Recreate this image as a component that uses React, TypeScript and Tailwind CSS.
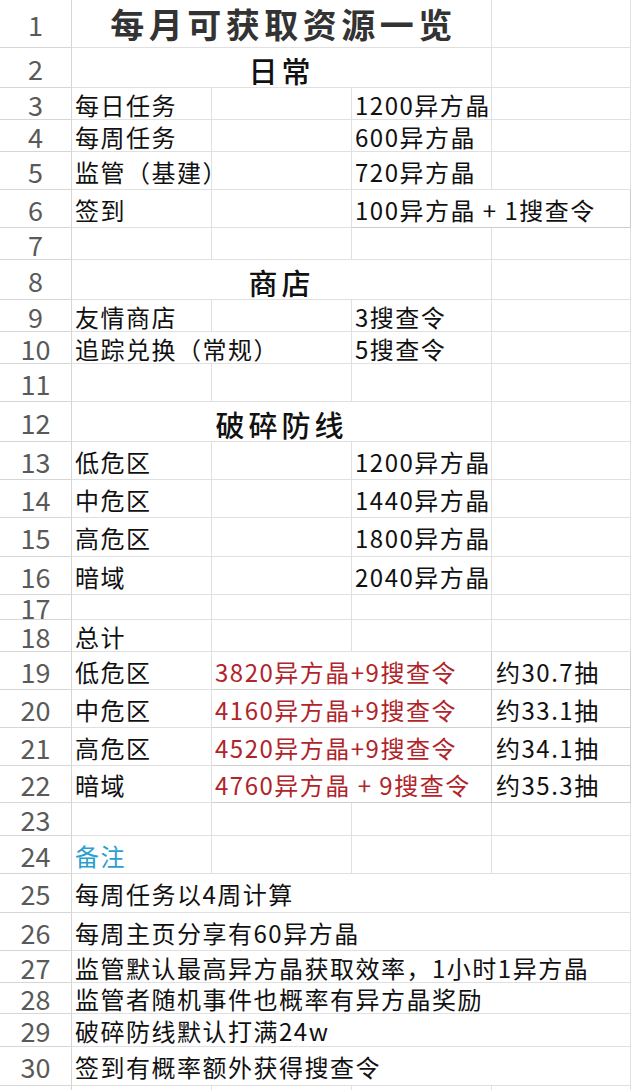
import React from "react";

const FONT = { fontFamily: '"Noto Sans CJK SC", "Noto Sans", sans-serif' };

type CellProps = {
  span?: string;
  text?: string;
  color?: string;
  pad?: string;
  border?: string;
  children?: React.ReactNode;
};

function Cell({
  span = "",
  text = "text-[24px] leading-[22px] tracking-[1.5px] justify-start pt-[2px]",
  color = "text-[#111]",
  pad = "pl-[3px]",
  border = "border-[#e0e0e0]",
  children,
}: CellProps) {
  return (
    <div
      className={`${span} ${text} ${color} ${pad} ${border} flex items-center whitespace-nowrap border-r border-b`}
    >
      {children}
    </div>
  );
}

function Row({ n, h, children }: { n?: number; h: string; children?: React.ReactNode }) {
  return (
    <div className={`grid grid-cols-[72px_140px_140px_140px_139px] ${h}`}>
      <div className="flex items-center justify-center border-r border-b border-[#d6d6d6] pt-[2px] text-[27px] leading-[20px] font-normal text-[#5a5a5a]">
        {n}
      </div>
      {children}
    </div>
  );
}

function Empty4() {
  return (
    <>
      <Cell />
      <Cell />
      <Cell />
      <Cell />
    </>
  );
}

function Header({ label }: { label: string }) {
  return (
    <>
      <Cell
        span="col-span-3"
        pad="pl-0"
        text="text-[29px] leading-[28px] tracking-[4px] font-medium justify-center pt-[5px]"
      >
        {label}
      </Cell>
      <Cell />
    </>
  );
}

function Item({ a, b, spanA = false }: { a: string; b: string; spanA?: boolean }) {
  return (
    <>
      {spanA ? (
        <Cell span="col-span-2">{a}</Cell>
      ) : (
        <>
          <Cell>{a}</Cell>
          <Cell />
        </>
      )}
      <Cell>{b}</Cell>
      <Cell />
    </>
  );
}

function Total({ a, b, c }: { a: string; b: string; c: string }) {
  return (
    <>
      <Cell>{a}</Cell>
      <Cell span="col-span-2" color="text-[#b0242a]" border="border-[#cfcfcf]">
        {b}
      </Cell>
      <Cell pad="pl-[4px]" border="border-[#cfcfcf]">
        {c}
      </Cell>
    </>
  );
}

function Note({ label }: { label: string }) {
  return <Cell span="col-span-4">{label}</Cell>;
}

export default function App() {
  return (
    <div className="w-[631px] h-[1090px] overflow-hidden bg-white" style={FONT}>
      <Row n={1} h="h-[48px]">
        <Cell
          span="col-span-3"
          pad="pl-[4px]"
          color="text-[#333]"
          text="text-[34px] leading-[34px] font-bold tracking-[4.5px] justify-center pt-[1px]"
        >
          每月可获取资源一览
        </Cell>
        <Cell />
      </Row>
      <Row n={2} h="h-[40px]">
        <Header label="日常" />
      </Row>
      <Row n={3} h="h-[32px]">
        <Item a="每日任务" b="1200异方晶" />
      </Row>
      <Row n={4} h="h-[32px]">
        <Item a="每周任务" b="600异方晶" />
      </Row>
      <Row n={5} h="h-[38px]">
        <Item a="监管（基建）" b="720异方晶" />
      </Row>
      <Row n={6} h="h-[38px]">
        <Cell>签到</Cell>
        <Cell />
        <Cell span="col-span-2" border="border-[#cccccc]">
          100异方晶 + 1搜查令
        </Cell>
      </Row>
      <Row n={7} h="h-[32px]">
        <Empty4 />
      </Row>
      <Row n={8} h="h-[40px]">
        <Header label="商店" />
      </Row>
      <Row n={9} h="h-[32px]">
        <Item a="友情商店" b="3搜查令" />
      </Row>
      <Row n={10} h="h-[32px]">
        <Item a="追踪兑换（常规）" b="5搜查令" spanA />
      </Row>
      <Row n={11} h="h-[38px]">
        <Empty4 />
      </Row>
      <Row n={12} h="h-[40px]">
        <Header label="破碎防线" />
      </Row>
      <Row n={13} h="h-[38px]">
        <Item a="低危区" b="1200异方晶" />
      </Row>
      <Row n={14} h="h-[38px]">
        <Item a="中危区" b="1440异方晶" />
      </Row>
      <Row n={15} h="h-[39px]">
        <Item a="高危区" b="1800异方晶" />
      </Row>
      <Row n={16} h="h-[38px]">
        <Item a="暗域" b="2040异方晶" />
      </Row>
      <Row n={17} h="h-[25px]">
        <Empty4 />
      </Row>
      <Row n={18} h="h-[32px]">
        <Cell>总计</Cell>
        <Cell />
        <Cell />
        <Cell />
      </Row>
      <Row n={19} h="h-[38px]">
        <Total a="低危区" b="3820异方晶+9搜查令" c="约30.7抽" />
      </Row>
      <Row n={20} h="h-[38px]">
        <Total a="中危区" b="4160异方晶+9搜查令" c="约33.1抽" />
      </Row>
      <Row n={21} h="h-[38px]">
        <Total a="高危区" b="4520异方晶+9搜查令" c="约34.1抽" />
      </Row>
      <Row n={22} h="h-[37px]">
        <Total a="暗域" b="4760异方晶 + 9搜查令" c="约35.3抽" />
      </Row>
      <Row n={23} h="h-[33px]">
        <Empty4 />
      </Row>
      <Row n={24} h="h-[38px]">
        <Cell color="text-[#2a9fd0]">备注</Cell>
        <Cell />
        <Cell />
        <Cell />
      </Row>
      <Row n={25} h="h-[39px]">
        <Note label="每周任务以4周计算" />
      </Row>
      <Row n={26} h="h-[38px]">
        <Note label="每周主页分享有60异方晶" />
      </Row>
      <Row n={27} h="h-[32px]">
        <Note label="监管默认最高异方晶获取效率，1小时1异方晶" />
      </Row>
      <Row n={28} h="h-[31px]">
        <Note label="监管者随机事件也概率有异方晶奖励" />
      </Row>
      <Row n={29} h="h-[33px]">
        <Note label="破碎防线默认打满24w" />
      </Row>
      <Row n={30} h="h-[39px]">
        <Note label="签到有概率额外获得搜查令" />
      </Row>
      <Row h="h-[39px]">
        <Empty4 />
      </Row>
    </div>
  );
}
